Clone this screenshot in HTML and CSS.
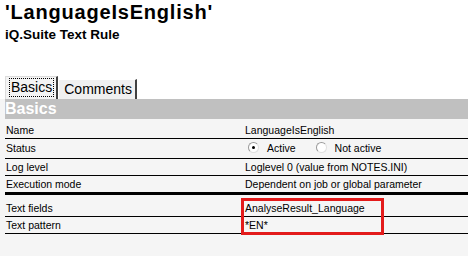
FILE: index.html
```html
<!DOCTYPE html>
<html lang="en">
<head>
  <meta charset="UTF-8" />
  <title>LanguageIsEnglish</title>
  <link rel="stylesheet" href="styles.css">
</head>
<body>
  <header class="head">
    <h1>'LanguageIsEnglish'</h1>
    <h2>iQ.Suite Text Rule</h2>
  </header>

  <div class="tabs">
    <div class="tab active"><span class="focus">Basics</span></div>
    <div class="tab">Comments</div>
  </div>

  <div class="panel">
    <div class="bar">Basics</div>

    <div class="row r-name">
      <div class="label">Name</div>
      <div class="value">LanguageIsEnglish</div>
    </div>
    <div class="row r-status">
      <div class="label">Status</div>
      <div class="value radios">
        <span class="radio checked"></span><span class="opt">Active</span>
        <span class="radio"></span><span class="opt">Not active</span>
      </div>
    </div>
    <div class="row">
      <div class="label">Log level</div>
      <div class="value">Loglevel 0 (value from NOTES.INI)</div>
    </div>
    <div class="row thick">
      <div class="label">Execution mode</div>
      <div class="value">Dependent on job or global parameter</div>
    </div>

    <div class="group">
      <div class="row">
        <div class="label">Text fields</div>
        <div class="value">AnalyseResult_Language</div>
      </div>
      <div class="row">
        <div class="label">Text pattern</div>
        <div class="value">*EN*</div>
      </div>
      <div class="highlight"></div>
    </div>
  </div>
</body>
</html>
```

FILE: styles.css
```css
body {
  margin: 0;
  background: #fff;
  color: #000;
  font-family: "Liberation Sans", Arial, sans-serif;
}

.head {
  padding: 1px 5px 0;
}

.head h1 {
  margin: 0;
  font-size: 20px;
  line-height: 22px;
  font-weight: 700;
  letter-spacing: 0.8px;
}

.head h2 {
  margin: 3px 0 0;
  font-size: 13.5px;
  line-height: 17px;
  font-weight: 700;
}

.tabs {
  display: flex;
  align-items: flex-end;
  margin-top: 33px;
  padding-left: 5px;
  height: 23px;
}

.tab {
  font-size: 14px;
  line-height: 18px;
  padding: 0 3px 0 5px;
  height: 19px;
  background: #f0f0f0;
  border-top: 1px solid #fff;
  border-left: 1px solid #fff;
  border-right: 2px solid #404040;
}

.tab.active {
  height: 22px;
  padding: 0 2px 0 3px;
  border-top: 1px solid #dcdcdc;
  border-left: 1px solid #dcdcdc;
  background: #f4f4f4;
}

.focus {
  display: inline-block;
  margin-top: 1px;
  padding: 0 1px;
  line-height: 17px;
  border: 1px dotted #000;
}

.panel {
  background: #f5f5f5;
  padding: 0 0 30px 5px;
}

.bar {
  background: #c0c0c0;
  color: #fff;
  font-size: 16px;
  font-weight: 700;
  line-height: 20px;
}

.row {
  display: grid;
  grid-template-columns: 240px 1fr;
  font-size: 10.5px;
  line-height: 16px;
  border-bottom: 1px solid #000;
}

.r-name {
  padding-top: 3px;
}

.r-status {
  line-height: 19px;
}

.row.thick {
  border-bottom: 3px solid #000;
}

.label {
  padding-left: 1px;
}

.radios {
  display: flex;
  align-items: center;
  padding-left: 3px;
}

.radio {
  width: 9px;
  height: 9px;
  border-radius: 50%;
  background: #fff;
  border: 1px solid #9a9a9a;
  border-right-color: #e0e0e0;
  border-bottom-color: #e0e0e0;
  position: relative;
  margin-bottom: 3px;
}

.radio.checked::after {
  content: "";
  position: absolute;
  left: 3px;
  top: 3px;
  width: 3px;
  height: 3px;
  border-radius: 50%;
  background: #000;
}

.opt {
  margin: 0 20px 0 8px;
}

.group {
  position: relative;
  margin-top: 5px;
}

.highlight {
  position: absolute;
  left: 236px;
  top: -2px;
  width: 137px;
  height: 31px;
  border: 3px solid #e31b1b;
}
```
